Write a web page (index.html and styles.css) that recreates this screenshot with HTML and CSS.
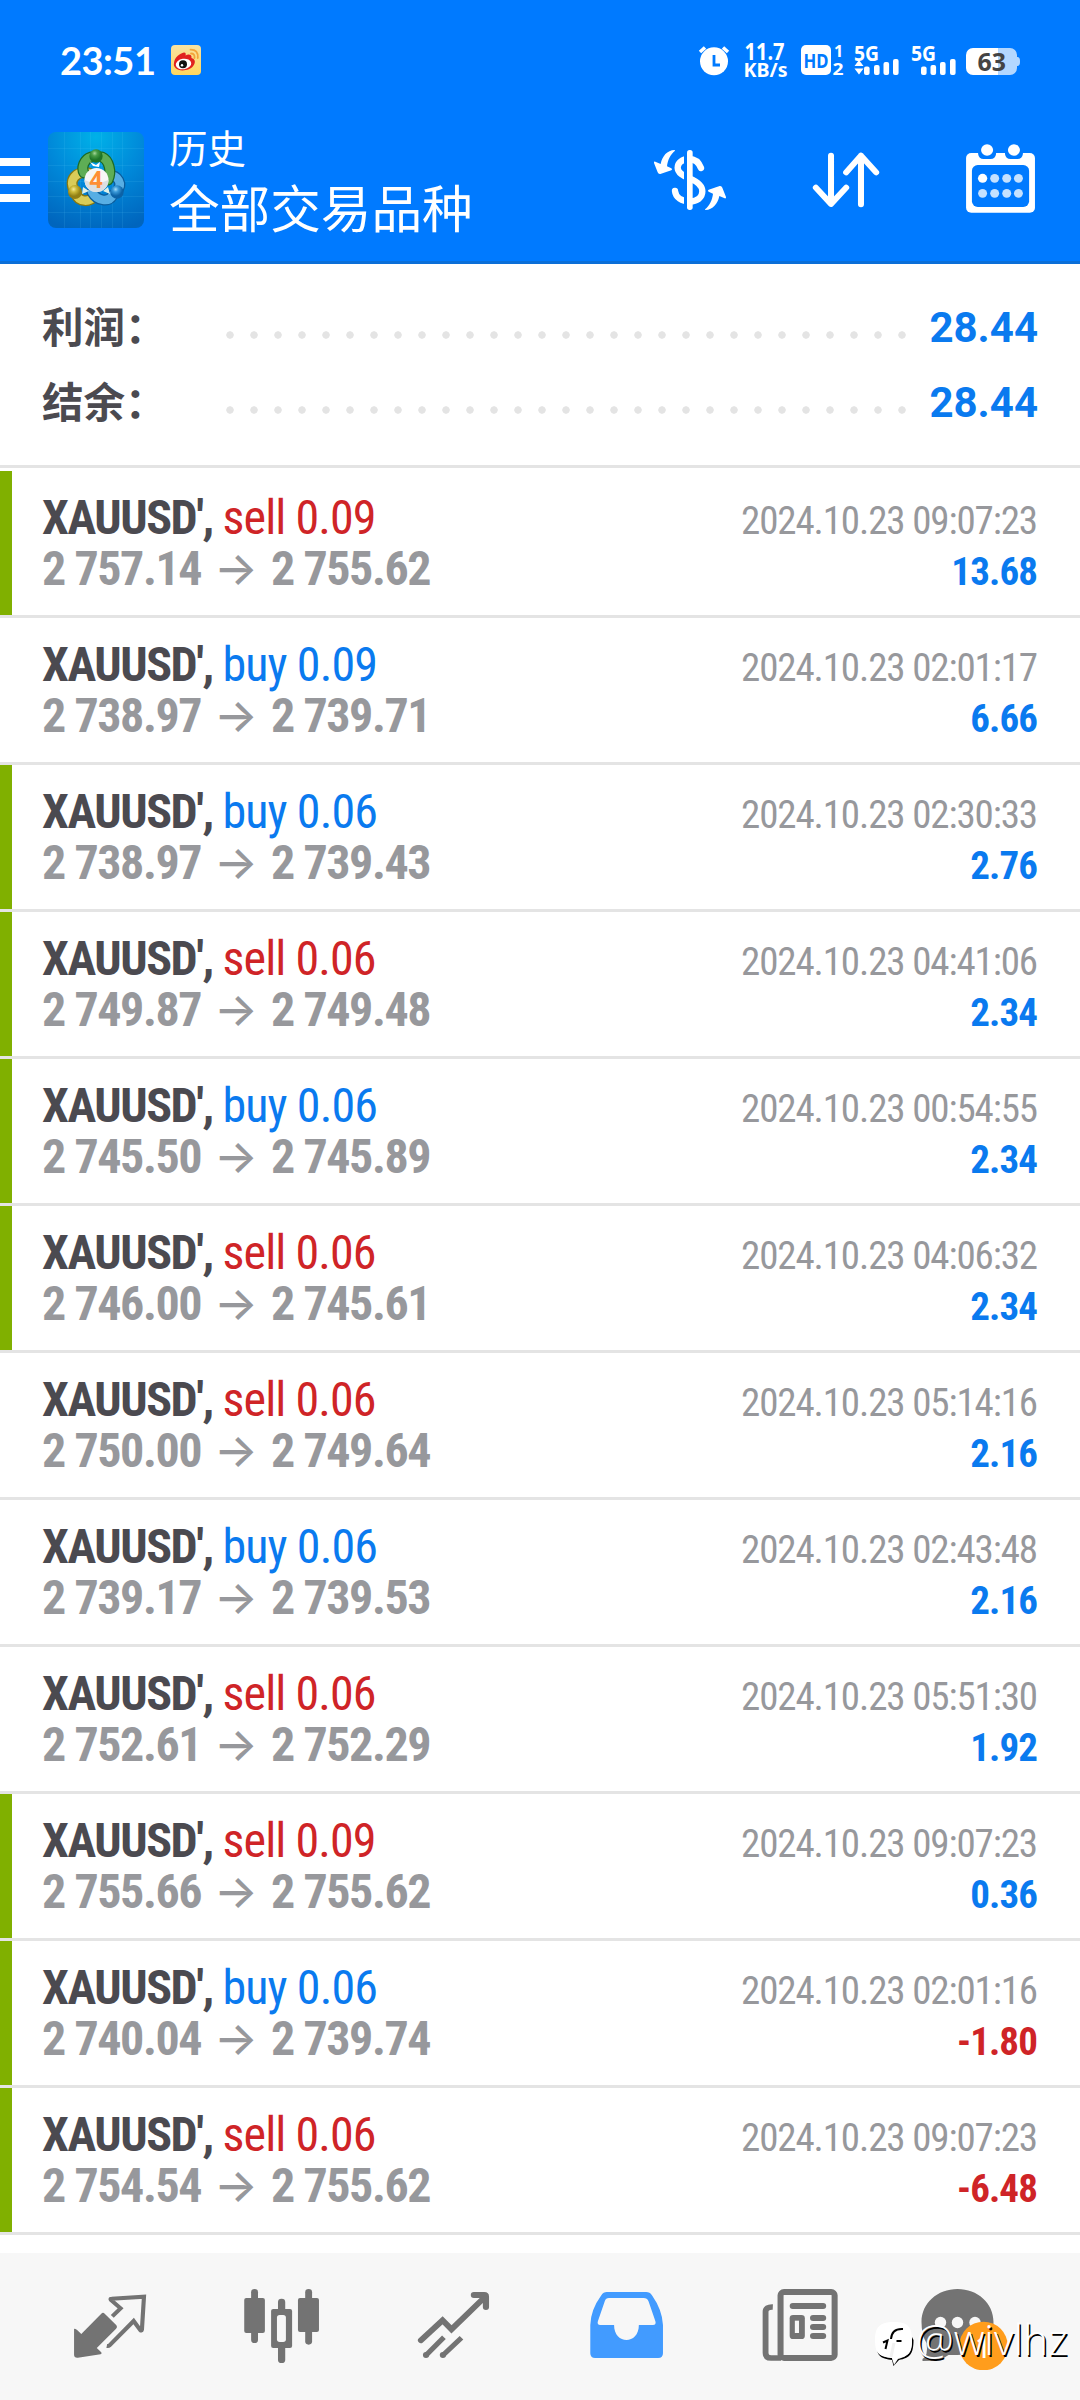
FILE: index.html
```html
<!DOCTYPE html>
<html lang="zh-CN">
<head>
<meta charset="utf-8">
<title>历史</title>
<link rel="stylesheet" href="styles.css">
</head>
<body>
<header class="header">
  <div class="status">
    <span class="clock">23:51</span>
    <svg class="weibo" width="30" height="30" viewBox="0 0 30 30">
      <defs><linearGradient id="wb" x1="0" y1="0" x2="0" y2="1"><stop offset="0" stop-color="#f7e2a2"/><stop offset="1" stop-color="#ffd75e"/></linearGradient></defs>
      <rect width="30" height="30" rx="4" fill="url(#wb)"/>
      <path d="M3 18C3 13 9 8 13 7.500C15 7.500 15 9 14.500 10.500C17 9 21 9 20.500 13C24 14 25 17 22.500 20.500C19 26 8 27 4.500 23C3 21.500 2.500 20 3 18Z" fill="#e1221f"/>
      <ellipse cx="12.500" cy="19" rx="7.800" ry="5.200" fill="#fff" transform="rotate(-8 12.500 19)"/>
      <circle cx="12" cy="19.300" r="4" fill="#111"/><circle cx="11" cy="20.300" r="1.200" fill="#fff"/>
      <path d="M20 8.500Q24 8.500 23.500 13M19.500 4.700Q27.500 4.500 26.800 13" fill="none" stroke="#f3a43a" stroke-width="1.800" stroke-linecap="round"/>
    </svg>
    <svg class="indicators" width="324" height="60" viewBox="698 30 324 60">
      <g fill="#fff">
        <circle cx="714" cy="61.300" r="14"/>
        <path d="M700 52L705 47.500M728 52L723 47.500" stroke="#fff" stroke-width="3.500"/>
        <path d="M714 55V65H720" fill="none" stroke="#007aff" stroke-width="2.800"/>
        <g class="tiny">
          <text x="744.500" y="59.500" font-size="24" textLength="40" lengthAdjust="spacingAndGlyphs">11.7</text>
          <text x="743.500" y="77" font-size="19" textLength="44" lengthAdjust="spacingAndGlyphs">KB/s</text>
        </g>
        <rect x="801" y="45" width="30" height="30" rx="5"/>
        <text class="tiny" x="803.500" y="67.500" font-size="20" textLength="25" lengthAdjust="spacingAndGlyphs" fill="#007aff">HD</text>
        <text class="tiny" x="834" y="57" font-size="16">1</text>
        <text class="tiny" x="832.500" y="74.500" font-size="16" textLength="11" lengthAdjust="spacingAndGlyphs">2</text>
        <text class="tiny" x="854" y="60.500" font-size="21" textLength="25" lengthAdjust="spacingAndGlyphs">5G</text>
        <path d="M854.500 66L859 60L863.500 66ZM854.500 68.500L859 74.500L863.500 68.500Z"/>
        <rect x="864" y="66.500" width="5.600" height="8.500" rx="2"/><rect x="874" y="65" width="5.600" height="10" rx="2"/><rect x="883.500" y="62" width="5.600" height="13" rx="2"/><rect x="893" y="59" width="5.600" height="16" rx="2"/>
        <text class="tiny" x="911" y="60.500" font-size="21" textLength="25" lengthAdjust="spacingAndGlyphs">5G</text>
        <rect x="921" y="66.500" width="5.600" height="8.500" rx="2"/><rect x="930.500" y="65" width="5.600" height="10" rx="2"/><rect x="940" y="62" width="5.600" height="13" rx="2"/><rect x="950" y="59" width="5.600" height="16" rx="2"/>
        <path d="M998.500 48H1010a7 7 0 0 1 7 7V57C1019 57 1020 58 1020 61.500S1019 66 1017 66V68a7 7 0 0 1-7 7H998.500Z" fill="#b3d7ff"/>
        <path d="M998.500 48H973a7 7 0 0 0-7 7V68a7 7 0 0 0 7 7H998.500Z"/>
        <text class="tiny" x="977.500" y="70.500" font-size="24.500" textLength="28.500" lengthAdjust="spacingAndGlyphs" fill="#444">63</text>
      </g>
    </svg>
  </div>
  <div class="toolbar">
    <svg class="menu" width="30" height="44" viewBox="0 0 30 44"><path d="M0 0H30V8H0ZM0 18H30V26H0ZM0 36H30V44H0Z" fill="#fff"/></svg>
    <svg class="logo" width="96" height="96" viewBox="0 0 96 96">
      <defs>
        <radialGradient id="bg" cx=".5" cy=".05" r="1"><stop offset="0" stop-color="#00b1e8"/><stop offset=".5" stop-color="#0088d9"/><stop offset="1" stop-color="#0065bd"/></radialGradient>
        <radialGradient id="gg" cx=".4" cy=".3"><stop offset="0" stop-color="#a5d59a"/><stop offset=".4" stop-color="#4a9e48"/><stop offset="1" stop-color="#1f7527"/></radialGradient>
        <radialGradient id="yg" cx=".4" cy=".3"><stop offset="0" stop-color="#f4ea9c"/><stop offset=".4" stop-color="#cdbc3c"/><stop offset="1" stop-color="#917f14"/></radialGradient>
        <radialGradient id="cg" cx=".4" cy=".3"><stop offset="0" stop-color="#a2dcfa"/><stop offset=".4" stop-color="#3c9bda"/><stop offset="1" stop-color="#0c62a6"/></radialGradient>
      </defs>
      <rect width="96" height="96" rx="8" fill="url(#bg)"/>
      <path d="M16.500 0V96M32.500 0V96M42.500 0V96M53.500 0V96M64.500 0V96M74.500 0V96M0 16.500H96M0 33.500H96M0 49.500H96M0 64.500H96M0 80.500H96" stroke="#6cdcff" stroke-opacity=".11"/>
      <g fill="none" stroke-linecap="round">
        <path d="M27 60C19 48 29 38 41 41M28 62C31 71 42 70 47 64" stroke="#87770f" stroke-width="11"/>
        <path d="M27 60C19 48 29 38 41 41M28 62C31 71 42 70 47 64" stroke="#d9cc58" stroke-width="8.500"/>
        <path d="M68 60C76 52 70 43 60 43M65 63C61 71 49 69 44 60" stroke="#0b5c9b" stroke-width="11"/>
        <path d="M68 60C76 52 70 43 60 43M65 63C61 71 49 69 44 60" stroke="#57aee4" stroke-width="8.500"/>
        <path d="M43 25C36 27 33 36 36 41M54 25C61 28 64 40 60 48" stroke="#1d6a25" stroke-width="11"/>
        <path d="M43 25C36 27 33 36 36 41M54 25C61 28 64 40 60 48" stroke="#5ead55" stroke-width="8.500"/>
      </g>
      <circle cx="48" cy="24" r="6.700" fill="url(#gg)"/><circle cx="27" cy="60" r="7" fill="url(#yg)"/><circle cx="69" cy="60" r="6.700" fill="url(#cg)"/>
      <path d="M45 34L42 30L48 33L52 30L51 35Z" fill="#fff"/>
      <path d="M34 62L35 55L41 59ZM62 62L60 55L55 59Z" fill="#dff1e9"/>
      <circle cx="48.500" cy="48" r="12" fill="#f6f6f6"/><path d="M36.500 48Q48 54 60.500 48A12 12 0 0 1 36.500 48Z" fill="#dcdfe2"/>
      <text x="41.500" y="56" class="four">4</text>
    </svg>
    <div class="titles"><div class="caption">历史</div><div class="title">全部交易品种</div></div>
    <svg class="act-dollar" width="90" height="80" viewBox="0 0 270 240">
      <path d="M168 84C160 63 146 57 132 57C112 57 98 68 98 83C98 100 118 108 133 115C158 125 172 136 172 154C172 174 155 184 135 184C110 184 92 173 90 153" fill="none" stroke="#fff" stroke-width="19" stroke-linecap="round"/>
      <path d="M117 30H126V210H117Z" fill="#007aff"/><rect x="126" y="30" width="17" height="180" rx="8" fill="#fff"/>
      <path id="sw" d="M89 30C66 31 52 48 47 72L31 65Q26 64 27 69L38 97Q40 103 46 102L79 91Q84 88 79 85L66 79C68 61 76 43 90 32Z" fill="#fff"/>
      <use href="#sw" transform="rotate(180 135 120)"/>
    </svg>
    <svg class="act-sort" width="72" height="80" viewBox="784 420 209 240" preserveAspectRatio="none">
      <path d="M845 467V610M801 563L845 612L889 563M932 613V467M889 517L932 467L976 517" fill="none" stroke="#fff" stroke-width="17.500" stroke-linecap="round" stroke-linejoin="round"/>
    </svg>
    <svg class="act-cal" width="72" height="80" viewBox="1231 420 209 240" preserveAspectRatio="none">
      <rect x="1237" y="459" width="200" height="179" rx="15" fill="#fff"/>
      <rect x="1254" y="495" width="166" height="126" rx="17" fill="#007aff"/>
      <path d="M1272 455V462Q1274 477 1288 477H1308Q1322 477 1324 462V455ZM1350 455V462Q1352 477 1366 477H1386Q1400 477 1402 462V455Z" fill="#007aff"/>
      <circle cx="1298" cy="450" r="17.500" fill="#fff"/><circle cx="1376" cy="450" r="17.500" fill="#fff"/>
      <circle cx="1285" cy="535" r="13.500" fill="#fff"/>
      <g fill="#c5e1ff"><circle cx="1320" cy="535" r="13"/><circle cx="1355" cy="535" r="13"/><circle cx="1389" cy="535" r="13"/><circle cx="1285" cy="580" r="13"/><circle cx="1320" cy="580" r="13"/><circle cx="1355" cy="580" r="13"/><circle cx="1389" cy="580" r="13"/></g>
    </svg>
  </div>
</header>

<section class="summary">
  <div class="sum-row"><span class="label">利润：</span><span class="dots"></span><span class="total">28.44</span></div>
  <div class="sum-row"><span class="label">结余：</span><span class="dots"></span><span class="total">28.44</span></div>
</section>

<main class="deals">
  <div class="deal tp"><div class="left"><div><b>XAUUSD', </b><span class="sell">sell 0.09</span></div><div class="prices">2 757.14<i>→</i>2 755.62</div></div><div class="right"><div>2024.10.23 09:07:23</div><div class="profit">13.68</div></div></div>
  <div class="deal"><div class="left"><div><b>XAUUSD', </b><span class="buy">buy 0.09</span></div><div class="prices">2 738.97<i>→</i>2 739.71</div></div><div class="right"><div>2024.10.23 02:01:17</div><div class="profit">6.66</div></div></div>
  <div class="deal tp"><div class="left"><div><b>XAUUSD', </b><span class="buy">buy 0.06</span></div><div class="prices">2 738.97<i>→</i>2 739.43</div></div><div class="right"><div>2024.10.23 02:30:33</div><div class="profit">2.76</div></div></div>
  <div class="deal tp"><div class="left"><div><b>XAUUSD', </b><span class="sell">sell 0.06</span></div><div class="prices">2 749.87<i>→</i>2 749.48</div></div><div class="right"><div>2024.10.23 04:41:06</div><div class="profit">2.34</div></div></div>
  <div class="deal tp"><div class="left"><div><b>XAUUSD', </b><span class="buy">buy 0.06</span></div><div class="prices">2 745.50<i>→</i>2 745.89</div></div><div class="right"><div>2024.10.23 00:54:55</div><div class="profit">2.34</div></div></div>
  <div class="deal tp"><div class="left"><div><b>XAUUSD', </b><span class="sell">sell 0.06</span></div><div class="prices">2 746.00<i>→</i>2 745.61</div></div><div class="right"><div>2024.10.23 04:06:32</div><div class="profit">2.34</div></div></div>
  <div class="deal"><div class="left"><div><b>XAUUSD', </b><span class="sell">sell 0.06</span></div><div class="prices">2 750.00<i>→</i>2 749.64</div></div><div class="right"><div>2024.10.23 05:14:16</div><div class="profit">2.16</div></div></div>
  <div class="deal"><div class="left"><div><b>XAUUSD', </b><span class="buy">buy 0.06</span></div><div class="prices">2 739.17<i>→</i>2 739.53</div></div><div class="right"><div>2024.10.23 02:43:48</div><div class="profit">2.16</div></div></div>
  <div class="deal"><div class="left"><div><b>XAUUSD', </b><span class="sell">sell 0.06</span></div><div class="prices">2 752.61<i>→</i>2 752.29</div></div><div class="right"><div>2024.10.23 05:51:30</div><div class="profit">1.92</div></div></div>
  <div class="deal tp"><div class="left"><div><b>XAUUSD', </b><span class="sell">sell 0.09</span></div><div class="prices">2 755.66<i>→</i>2 755.62</div></div><div class="right"><div>2024.10.23 09:07:23</div><div class="profit">0.36</div></div></div>
  <div class="deal tp"><div class="left"><div><b>XAUUSD', </b><span class="buy">buy 0.06</span></div><div class="prices">2 740.04<i>→</i>2 739.74</div></div><div class="right"><div>2024.10.23 02:01:16</div><div class="profit loss">-1.80</div></div></div>
  <div class="deal tp"><div class="left"><div><b>XAUUSD', </b><span class="sell">sell 0.06</span></div><div class="prices">2 754.54<i>→</i>2 755.62</div></div><div class="right"><div>2024.10.23 09:07:23</div><div class="profit loss">-6.48</div></div></div>
</main>

<nav class="nav">
  <svg width="90" height="90" viewBox="188.700 210 261.300 270" preserveAspectRatio="none">
    <path d="M215 357Q219 354 236 372L294 311Q299 306 304 311L338 346Q342 351 337 356L281 414L294 427Q297 431 292 433L226 443Q215 444 215 434Z" fill="#737373"/>
    <path d="M326 319L350 295L322 270Q319 266 324 266L418 260L412 359Q411 364 407 360L388 333L318 406Q315 409 310 408" fill="none" stroke="#737373" stroke-width="12"/>
  </svg>
  <svg width="90" height="90" viewBox="688 210 261.300 270" preserveAspectRatio="none" fill="#737373">
    <rect x="729" y="237" width="20" height="162" rx="10"/><rect x="709" y="264" width="60" height="105" rx="6"/>
    <rect x="886" y="237" width="20" height="167" rx="10"/><rect x="865" y="264" width="61" height="102" rx="6"/>
    <rect x="807" y="266" width="21" height="193" rx="10"/><rect x="787" y="297" width="61" height="117" rx="6"/><rect x="804" y="315" width="26" height="81" rx="8" fill="#f7f7f7"/>
  </svg>
  <svg width="90" height="90" viewBox="1187.600 210 261.300 270" preserveAspectRatio="none">
    <g fill="none" stroke="#737373" stroke-linejoin="miter"><path d="M1222 391L1285 331L1311 358L1408 261" stroke-width="17" stroke-linecap="round"/><path d="M1376 255H1406Q1411 255 1411 260V291" stroke-width="18" stroke-linecap="round"/><path d="M1237 436L1289 382M1286 436L1340 383" stroke-width="15"/></g>
    <circle cx="1237" cy="435" r="9" fill="#737373"/><circle cx="1286" cy="435" r="9" fill="#737373"/>
  </svg>
  <svg width="90" height="90" viewBox="119 210 261.300 270" preserveAspectRatio="none">
    <path d="M194 246H308Q319 246 325 256Q355 300 357 345V430Q357 444 343 444H160Q146 444 146 430V345Q147 300 178 256Q184 246 194 246Z" fill="#429bff"/>
    <path d="M200 264H301Q311 264 315 274L335 334Q338 345 328 345H287C287 405 215 405 215 345H175Q165 345 168 334L188 274Q191 264 200 264Z" fill="#f7f7f7"/>
  </svg>
  <svg width="90" height="90" viewBox="618.500 210 261.300 270" preserveAspectRatio="none">
    <rect x="698.500" y="246" width="157" height="198" rx="10" fill="none" stroke="#737373" stroke-width="17.500"/>
    <path d="M676 291Q655 290 655 306V428Q655 444 671 444H700" fill="none" stroke="#737373" stroke-width="17"/>
    <path d="M734 288H822M793 324H822M793 351H822M793 378H822" stroke="#737373" stroke-width="18" stroke-linecap="round"/>
    <rect x="725" y="315" width="44" height="72" rx="10" fill="#737373"/><rect x="740" y="332" width="12" height="37" fill="#f7f7f7"/>
  </svg>
  <svg width="110" height="90" viewBox="4.500 0 110 90">
    <path d="M47 9C67 9 83 23 83 42S67 75 47 75H38Q31 81 12 81V79Q18 76 16 63Q11 55 11 42C11 23 27 9 47 9Z" fill="#737373"/>
    <circle cx="30" cy="42.500" r="5.700" fill="#f7f7f7"/><circle cx="47" cy="42.500" r="5.700" fill="#f7f7f7"/><circle cx="64.500" cy="42.500" r="5.700" fill="#f7f7f7"/>
    <circle cx="73" cy="66" r="24.300" fill="#ff9d1c"/><text x="64" y="77.500" class="badge">1</text>
  </svg>
  <div class="watermark">
    <svg width="40" height="46" viewBox="0 0 40 46">
      <path d="M2 28C4 33 8 35 17 36L19 43L23 37C34 34 37.500 30 37 15L38.500 18C38.500 32 35 36 24 38L18.500 44L17 38C7 37 3 34 2 28Z" fill="#000"/>
      <path d="M19 0C33 0 37 5 37 18C37 31 34 34 23 36L19 41L17 36C4 35 0 31 0 18C0 5 5 0 19 0Z" fill="#fff"/>
      <path d="M16 17C16.500 10 20 6.500 28 7M21.500 19H26.500M8 20.500L12.500 18.500L10.500 27" fill="none" stroke="#000" stroke-width="2"/>
      <path d="M19 21L16 35" stroke="#f1f1f1" stroke-width="3"/>
    </svg>
    <span>@wivlhz</span>
  </div>
</nav>
</body>
</html>
```
FILE: styles.css
```css
* { box-sizing: border-box; }
body {
  margin: 0;
  width: 1080px;
  height: 2400px;
  background: #fff;
  font-family: "Roboto Condensed", Roboto, "Noto Sans CJK SC", sans-serif;
  overflow: hidden;
}
svg { display: block; flex: none; }

/* Header */
.header { height: 264px; background: #007aff; border-bottom: 3px solid #0b6fd8; color: #fff; }
.status { height: 120px; display: flex; align-items: center; padding: 0 58px 0 60px; }
.clock { font: 700 38px/40px Lato, sans-serif; width: 111px; letter-spacing: -0.5px; }
.indicators { margin-left: auto; }
.tiny { font-family: "Noto Sans", sans-serif; font-weight: 700; }
.toolbar { height: 120px; display: flex; align-items: center; padding-right: 44px; }
.logo { margin-left: 18px; }
.four { font: 700 23px "Noto Sans", sans-serif; fill: #ff8f35; }
.titles { flex: 1; height: 120px; padding-left: 25px; font-family: "Noto Sans CJK SC", sans-serif; }
.caption { font-size: 38.5px; line-height: 52px; }
.title { font-size: 50.6px; line-height: 68px; white-space: nowrap; }
.act-sort { margin-left: 75px; }
.act-cal { margin-left: 82px; }

/* Totals */
.summary { height: 204px; padding: 26px 42px 0; border-bottom: 3px solid #e4e4e4; }
.sum-row { height: 75px; display: flex; align-items: center; }
.label { width: 176px; white-space: nowrap; font: 700 41.5px/75px "Noto Sans CJK SC", sans-serif; color: #4b4a50; margin-top: -5px; }
.dots { width: 696px; height: 8px; margin-top: 15px; background: radial-gradient(circle 4px at 12px 4px, #e4e4e4 85%, transparent 100%) 0 0 / 24px 8px; }
.total { flex: 1; text-align: right; font: 700 42px/75px Roboto, sans-serif; color: #0a7aef; }

/* Deals */
.deals { padding-top: 3px; height: 1785px; }
.deal {
  height: 147px;
  display: flex;
  justify-content: space-between;
  padding: 21px 42px 0;
  font-size: 48px;
  line-height: 51px;
  background: linear-gradient(#e4e4e4, #e4e4e4) 0 100% / 100% 3px no-repeat;
}
.tp {
  background: linear-gradient(#e4e4e4, #e4e4e4) 0 100% / 100% 3px no-repeat,
              linear-gradient(#80b000, #80b000) 0 0 / 12px 144px no-repeat;
}
.left { white-space: pre; }
.deal b { color: #4b4a50; letter-spacing: -1.44px; }
.sell, .buy { letter-spacing: -0.9px; }
.sell { color: #cf2427; }
.buy { color: #0a7aef; }
.prices { color: #97989c; font-weight: 700; letter-spacing: -1.44px; }
.prices i { display: inline-block; width: 70px; text-align: center; letter-spacing: 0; font: 500 46px/1px Inter, sans-serif; }
.right { padding-top: 4px; padding-right: 1px; font-size: 39px; color: #97989c; text-align: right; letter-spacing: -1.12px; }
.profit { font-weight: 700; color: #0a7aef; letter-spacing: -0.9px; }
.loss { color: #cf2427; }

/* Bottom navigation */
.nav { position: relative; height: 147px; background: #f7f7f7; display: grid; grid-template-columns: repeat(6, 172px); justify-content: center; justify-items: center; padding-top: 27px; }
.badge { font: 400 31px "Noto Sans", sans-serif; fill: #fff; }
.watermark { position: absolute; left: 875px; top: 69px; display: flex; align-items: flex-start; }
.watermark span { margin-left: 1px; margin-top: -6px; font: 300 42.5px/46px "Open Sans", sans-serif; color: #fff; text-shadow: 1.500px 1.500px 0.500px #000; }
```
